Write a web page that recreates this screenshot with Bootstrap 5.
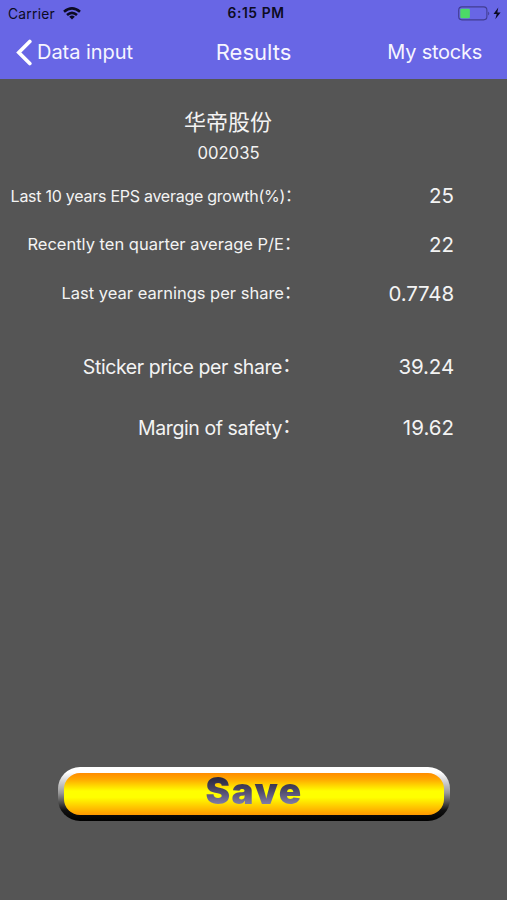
<!DOCTYPE html>
<html lang="en">
<head>
<meta charset="utf-8">
<meta name="viewport" content="width=device-width, initial-scale=1">
<title>Results</title>
<link href="https://cdn.jsdelivr.net/npm/bootstrap@5.3.0/dist/css/bootstrap.min.css" rel="stylesheet">
<style>
body{font-family:Inter,"Noto Sans CJK SC",sans-serif;background:#555;color:#f3f3f3;white-space:nowrap}
.screen{width:507px;height:900px;overflow:hidden}
.topbar{background:#6866e5;height:79px}
.status{height:27px;color:#0c0b22;display:grid;grid-template-columns:1fr auto 1fr;padding:0 5px 0 8px}
.carrier{font-size:13.8px;letter-spacing:.25px;line-height:22px;padding-top:1px}
.clock{font-size:13.8px;font-weight:600;letter-spacing:.6px;margin-left:2px}
.navrow{height:50px;display:grid;grid-template-columns:1fr auto 1fr;color:#f6f5ff;padding:0 25px 0 16px}
.navlink{font-size:20px;color:inherit;text-decoration:none;letter-spacing:-.05px}
.navlink.end{letter-spacing:-.25px}
.navtitle{font-size:22px;letter-spacing:0;line-height:49px;margin-left:9px}
.stock{font-size:22px;line-height:32px;margin-top:27px;padding-right:51px}
.code{font-size:16.7px;line-height:24px;margin-top:3px;padding-right:50px}
.line-item{height:49px;padding-right:53px}
.cell-label{width:304px;font-size:16.5px;text-align:right;line-height:22px;padding-bottom:3px}
.cell-label.tight{font-size:16px;letter-spacing:-.26px;padding-bottom:1px}
.cell-label.big{font-size:19.5px;letter-spacing:-.42px}
.colon{display:inline-block;width:20px;text-align:left;font-family:"Noto Sans CJK SC",sans-serif;line-height:1;vertical-align:1.5px}
.tight .colon{width:19px}
.big .colon{width:22px}
.cell-value{font-size:20.5px}
.cell-value.snug{letter-spacing:-.15px}
.save{margin:314px 0 0 58px;width:392px;height:54px;padding:6px;border:0;border-radius:22px;background:linear-gradient(#fff 0,#fff 10%,#999 48%,#111 80%,#000)}
.save-face{height:42px;border-radius:16px;background:linear-gradient(#ff8c00,#ffa800 15%,#ff0 43%,#ff0 58%,#ff9800)}
.save-text{font-size:37px;font-weight:900;line-height:36px;letter-spacing:1.5px;color:transparent;background:linear-gradient(#27253c 10%,#45415f 42%,#8581ac 90%);-webkit-background-clip:text;background-clip:text}
</style>
</head>
<body>
<div class="screen d-flex flex-column">
<header class="topbar">
  <div class="status align-items-center">
    <div class="d-flex align-items-center gap-2"><span class="carrier">Carrier</span>
      <svg width="18" height="13" viewBox="0 0 18 13" fill="none" stroke="#0c0b22" stroke-width="2.6"><path d="M1 4.8Q9-2 17 4.8M4 8Q9 3.6 14 8"/><path d="M9 12.6 6.2 9.7Q9 7.5 11.8 9.7Z" fill="#0c0b22" stroke="none"/></svg>
    </div>
    <span class="clock">6:15 PM</span>
    <svg class="ms-auto" width="45" height="15" viewBox="0 0 45 15"><rect x="1.7" y=".9" width="28.2" height="13" rx="3.3" fill="none" stroke="#413d91" stroke-width="1.1"/><rect x="3.3" y="2.7" width="9.6" height="9.6" rx="1.2" fill="#4cdb67"/><path d="M31.2 5.4Q33.3 7.4 31.2 9.4Z" fill="#413d91"/><path d="M41.3 1.4 36.5 8h3.2l-1.4 5.3L43.6 6.4h-3.3z" fill="#0c0b22"/></svg>
  </div>
  <nav class="navrow align-items-center">
    <a class="navlink d-flex align-items-center" href="#"><svg class="me-1" width="17" height="27" viewBox="0 0 17 27" fill="none" stroke="#fff" stroke-width="3.7" stroke-linecap="round"><path d="M13.8 2.5 2.8 13.5l11 11"/></svg>Data input</a>
    <span class="navtitle">Results</span>
    <a class="navlink end text-end" href="#">My stocks</a>
  </nav>
</header>
<main>
  <div class="stock text-center">华帝股份</div>
  <div class="code text-center">002035</div>
  <div class="line-item d-flex align-items-center justify-content-between" style="margin-top:7px"><div class="cell-label tight">Last 10 years EPS average growth(%)<span class="colon">：</span></div><div class="cell-value">25</div></div>
  <div class="line-item d-flex align-items-center justify-content-between"><div class="cell-label">Recently ten quarter average P/E<span class="colon">：</span></div><div class="cell-value">22</div></div>
  <div class="line-item d-flex align-items-center justify-content-between"><div class="cell-label">Last year earnings per share<span class="colon">：</span></div><div class="cell-value snug">0.7748</div></div>
  <div class="line-item d-flex align-items-center justify-content-between mt-4"><div class="cell-label big">Sticker price per share<span class="colon">：</span></div><div class="cell-value snug">39.24</div></div>
  <div class="line-item d-flex align-items-center justify-content-between" style="margin-top:12px"><div class="cell-label big">Margin of safety<span class="colon">：</span></div><div class="cell-value">19.62</div></div>
  <button class="save d-block" type="button"><span class="save-face d-block"><span class="save-text d-inline-block">Save</span></span></button>
</main>
</div>
<script src="https://cdn.jsdelivr.net/npm/bootstrap@5.3.0/dist/js/bootstrap.bundle.min.js"></script>
</body>
</html>
